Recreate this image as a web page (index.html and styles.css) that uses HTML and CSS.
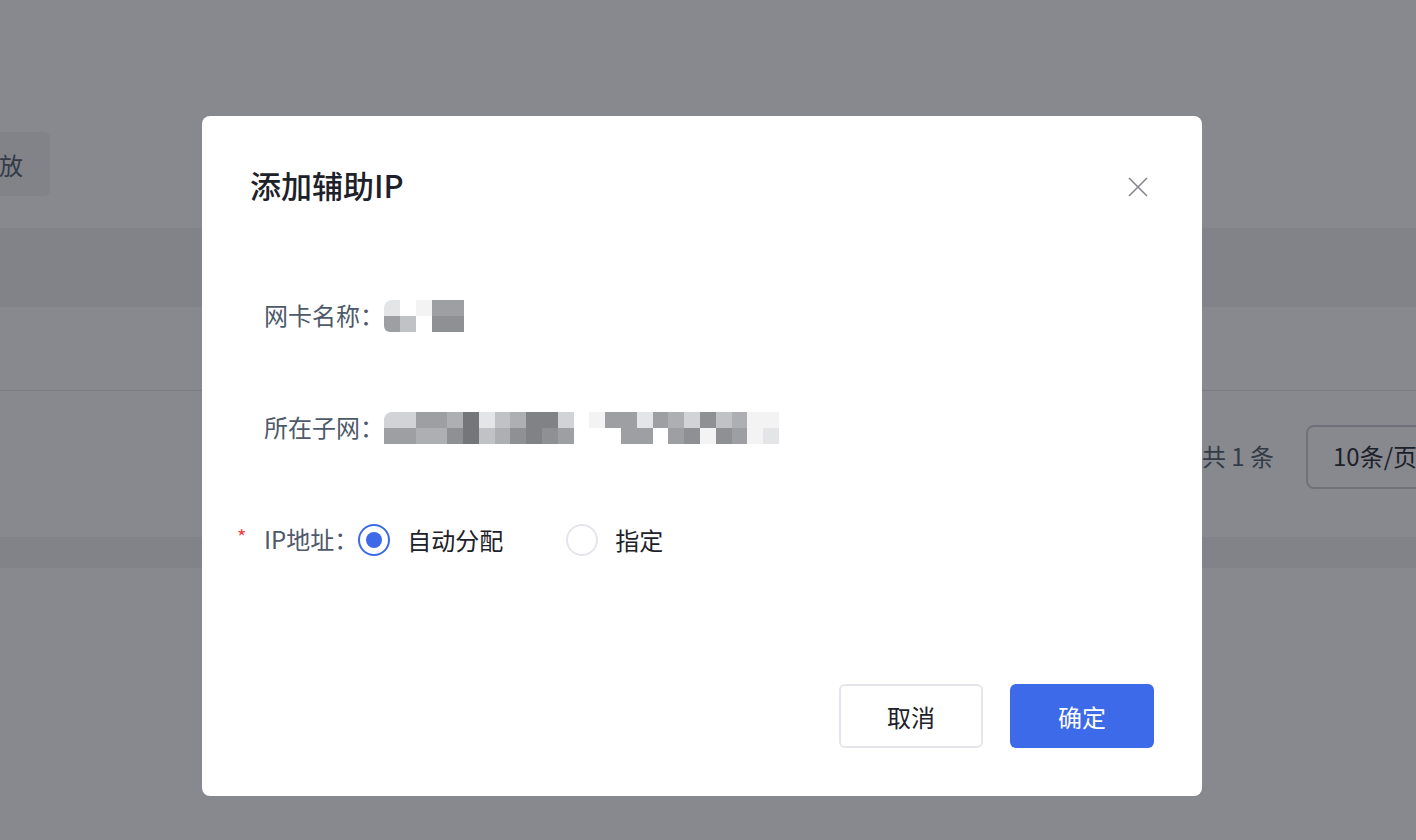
FILE: index.html
```html
<!DOCTYPE html>
<html lang="zh-CN">
<head>
  <meta charset="UTF-8" />
  <meta name="viewport" content="width=device-width, initial-scale=1.0"/>
  <title>添加辅助IP</title>
  <link rel="stylesheet" href="styles.css">
</head>
<body>
<div class="page">
  <div class="toolbar">
    <button class="btn-light">释放</button>
  </div>
  <div class="table">
    <div class="thead"></div>
    <div class="trow"></div>
  </div>
  <div class="pager">
    <span class="total">共 1 条</span>
    <div class="page-size">10条/页</div>
  </div>
  <div class="band"></div>
</div>

<div class="mask"></div>

<div class="modal">
  <div class="modal-header">
    <h2>添加辅助IP</h2>
    <button class="close" aria-label="关闭">
      <svg width="20" height="20" viewBox="0 0 20 20"><path d="M1 1L19 19M19 1L1 19" stroke="#86878c" stroke-width="1.6" fill="none"/></svg>
    </button>
  </div>

  <div class="modal-body">
    <div class="form-row">
      <span class="label">网卡名称：</span>
      <div class="mosaic name">
        <i class="m2 r-tl"></i><i class="m0"></i><i class="m1"></i><i class="m6"></i><i class="m6"></i>
        <i class="m6 r-bl"></i><i class="m4"></i><i class="m0"></i><i class="m7"></i><i class="m7"></i>
      </div>
    </div>

    <div class="form-row">
      <span class="label">所在子网：</span>
      <div class="mosaic subnet">
        <i class="m3 r-tl"></i><i class="m3"></i><i class="m6"></i><i class="m6"></i><i class="m5"></i><i class="m9"></i><i class="m2"></i><i class="m4"></i><i class="m5"></i><i class="m8"></i><i class="m8"></i><i class="m3"></i><i class="m0"></i><i class="m1"></i><i class="m6"></i><i class="m6"></i><i class="m2"></i><i class="m6"></i><i class="m5"></i><i class="m3"></i><i class="m7"></i><i class="m4"></i><i class="m5"></i><i class="m1"></i><i class="m1"></i>
        <i class="m6"></i><i class="m6"></i><i class="m5"></i><i class="m5"></i><i class="m7"></i><i class="m9"></i><i class="m4"></i><i class="m5"></i><i class="m7"></i><i class="m8"></i><i class="m7"></i><i class="m6"></i><i class="m0"></i><i class="m0"></i><i class="m0"></i><i class="m6"></i><i class="m6"></i><i class="m0"></i><i class="m6"></i><i class="m7"></i><i class="m1"></i><i class="m7"></i><i class="m6"></i><i class="m1"></i><i class="m2"></i>
      </div>
    </div>

    <div class="form-row required">
      <span class="star">*</span>
      <span class="label">IP地址：</span>
      <label class="radio checked"><span class="dot"></span>自动分配</label>
      <label class="radio"><span class="dot"></span>指定</label>
    </div>
  </div>

  <div class="modal-footer">
    <button class="btn btn-cancel">取消</button>
    <button class="btn btn-primary">确定</button>
  </div>
</div>
</body>
</html>
```

FILE: styles.css
```css
body {
  margin: 0;
  overflow: hidden;
  background: #ffffff;
  font-family: "Noto Sans CJK SC", "Noto Sans", sans-serif;
  color: #1d2129;
}

button {
  font-family: inherit;
  cursor: pointer;
}

/* page behind the dialog */
.page {
  width: 1416px;
}

.toolbar {
  height: 228px;
  padding-top: 132px;
  box-sizing: border-box;
}

.btn-light {
  height: 64px;
  margin-left: -52px;
  padding: 0 27px;
  border: none;
  border-radius: 6px;
  background: #f2f3f5;
  color: #4e5969;
  font-size: 24px;
}

.thead {
  height: 79px;
  background: #f2f3f5;
}

.trow {
  height: 83px;
  border-bottom: 1px solid #e5e6eb;
}

.pager {
  height: 146px;
  padding-top: 34px;
  box-sizing: border-box;
  display: flex;
  justify-content: flex-end;
  align-items: flex-start;
  gap: 32px;
}

.total {
  height: 64px;
  line-height: 62px;
  font-size: 24px;
  color: #4e5969;
}

.page-size {
  width: 150px;
  height: 64px;
  margin-right: -40px;
  padding-left: 25px;
  box-sizing: border-box;
  border: 2px solid #c9cdd4;
  border-radius: 8px;
  line-height: 58px;
  font-size: 24px;
  color: #1d2129;
}

.band {
  height: 31px;
  background: #f2f3f5;
}

.mask {
  position: fixed;
  inset: 0;
  background: rgba(29, 33, 41, 0.53);
}

/* dialog */
.modal {
  position: fixed;
  left: 202px;
  top: 116px;
  width: 1000px;
  height: 680px;
  box-sizing: border-box;
  padding: 0 48px 48px;
  background: #ffffff;
  border-radius: 8px;
  display: flex;
  flex-direction: column;
}

.modal-header {
  margin-top: 49px;
  height: 40px;
  display: flex;
  justify-content: space-between;
  align-items: center;
}

.modal-header h2 {
  margin: 0;
  font-size: 31px;
  font-weight: 500;
  line-height: 40px;
  color: #1d2129;
}

.close {
  width: 20px;
  height: 20px;
  margin-top: 3px;
  margin-right: 6px;
  padding: 0;
  border: none;
  background: none;
  display: flex;
}

.modal-body {
  padding: 95px 0 0 14px;
  display: flex;
  flex-direction: column;
  gap: 80px;
}

.form-row {
  height: 32px;
  display: flex;
  align-items: center;
  font-size: 24px;
  line-height: 32px;
}

.label {
  color: #4e5969;
  margin-top: -3px;
}

.star {
  width: 27px;
  margin-left: -27px;
  color: #f53f3f;
  font-size: 20px;
  margin-top: -6px;
}

.mosaic {
  display: grid;
  grid-template-rows: 16px 16px;
}

.mosaic.name {
  grid-template-columns: repeat(5, 16px);
}

.mosaic.subnet {
  grid-template-columns: repeat(25, 15.8px);
}

.mosaic i {
  display: block;
}

.r-tl { border-top-left-radius: 8px; }
.r-bl { border-bottom-left-radius: 6px; }

.m0 { background: #ffffff; }
.m1 { background: #f3f3f4; }
.m2 { background: #e4e5e7; }
.m3 { background: #d2d3d6; }
.m4 { background: #c1c2c5; }
.m5 { background: #aeafb3; }
.m6 { background: #9e9fa3; }
.m7 { background: #8f9094; }
.m8 { background: #818286; }
.m9 { background: #75767a; }

.radio {
  display: flex;
  align-items: center;
  gap: 17px;
  margin-right: 63px;
  color: #1d2129;
}

.radio .dot {
  width: 32px;
  height: 32px;
  box-sizing: border-box;
  border: 2px solid #e5e6eb;
  border-radius: 50%;
  display: flex;
  align-items: center;
  justify-content: center;
}

.radio.checked .dot {
  border-color: #3c6ae8;
}

.radio.checked .dot::after {
  content: "";
  width: 16px;
  height: 16px;
  border-radius: 50%;
  background: #3c6ae8;
}

.modal-footer {
  margin-top: auto;
  display: flex;
  justify-content: flex-end;
  gap: 27px;
}

.btn {
  width: 144px;
  height: 64px;
  border-radius: 6px;
  font-size: 24px;
}

.btn-cancel {
  background: #ffffff;
  border: 2px solid #e5e6eb;
  color: #1d2129;
}

.btn-primary {
  background: #3c6ae8;
  border: none;
  color: #ffffff;
}
```
